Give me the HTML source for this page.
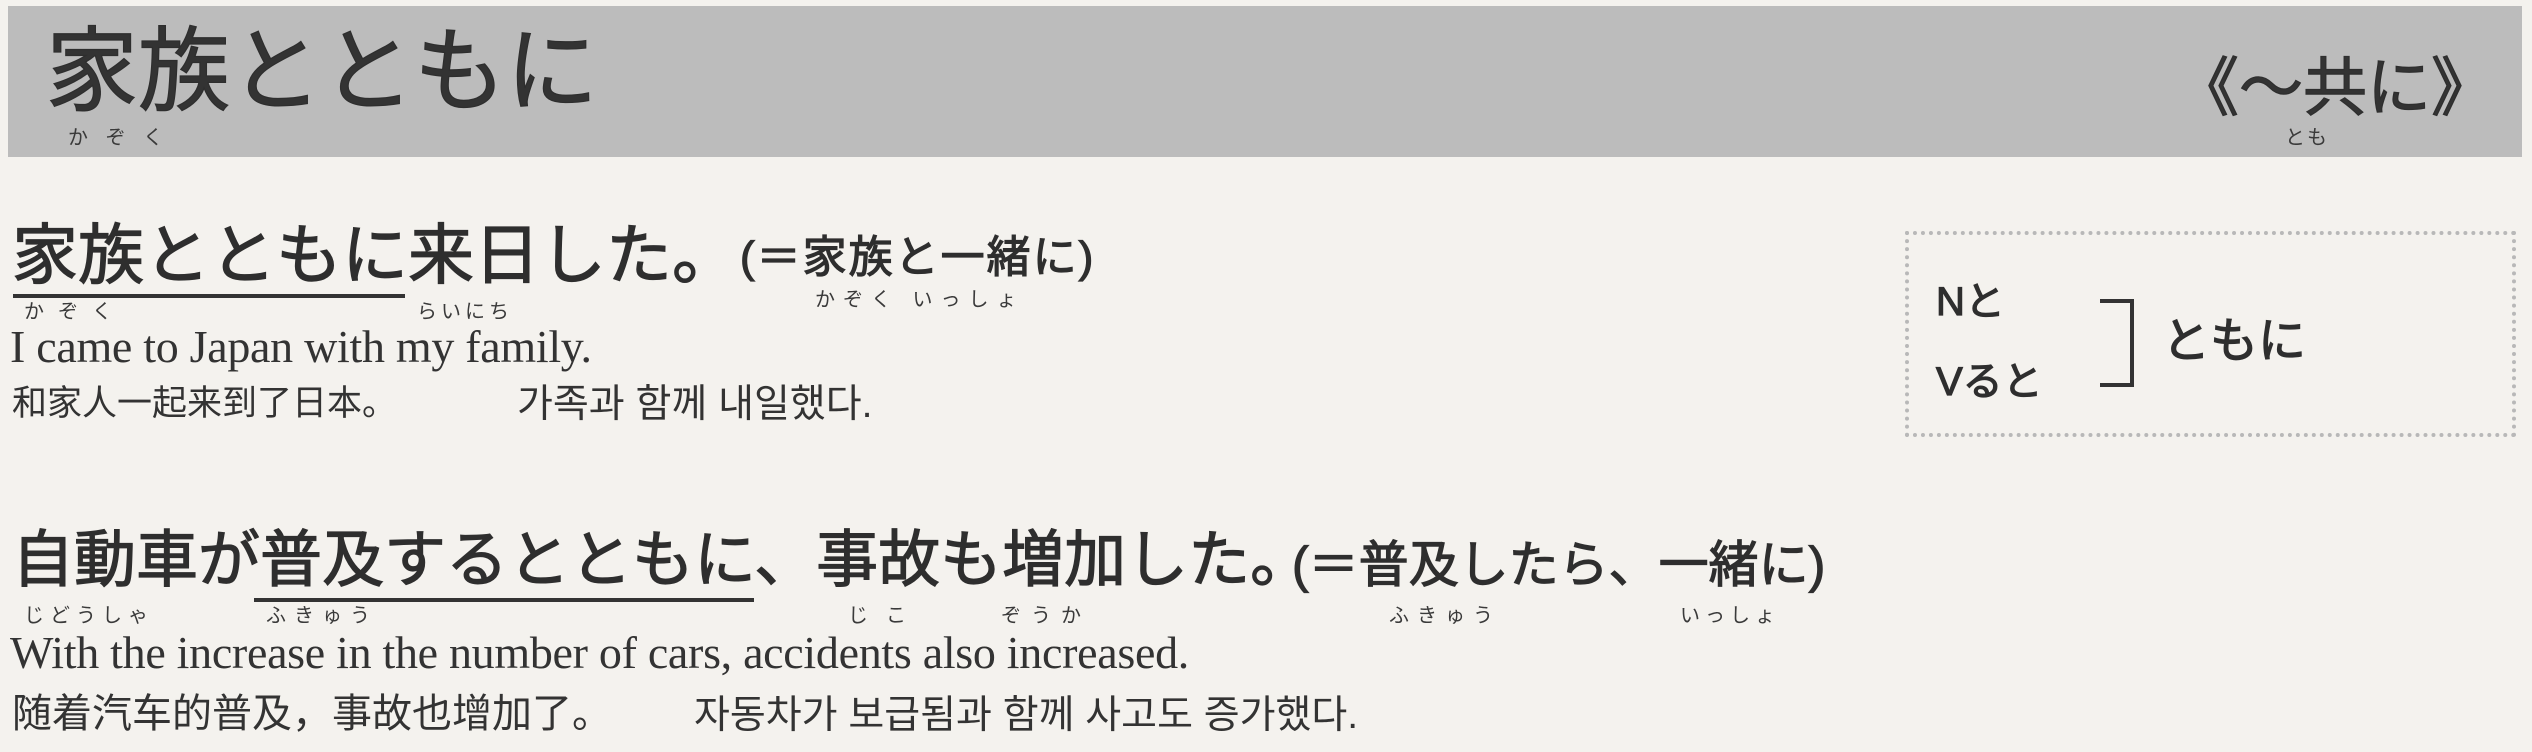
<!DOCTYPE html>
<html><head><meta charset="utf-8"><style>
html,body{margin:0;padding:0}
body{width:2532px;height:752px;background:#f4f2ee;position:relative;overflow:hidden;color:#2e2e2e;font-family:"Liberation Sans","Noto Sans CJK JP",sans-serif}
.a{position:absolute;white-space:nowrap;line-height:1}
.b{-webkit-text-stroke:1.2px #2e2e2e}
.band{position:absolute;left:8px;top:6px;width:2514px;height:151px;background:#bcbcbc}
.f{font-size:20px;color:#3a3a3a;letter-spacing:6px}
.en{font-family:"Liberation Serif",serif;font-size:46px;letter-spacing:-0.3px;color:#333}
.zh{font-family:"Liberation Sans","Noto Sans CJK SC",sans-serif;color:#333}
.ko{font-family:"Liberation Sans","Noto Sans CJK KR",sans-serif;font-size:39px;color:#333}
.ul{position:absolute;height:4px;background:#333}
.box{position:absolute;left:1905px;top:231px;width:611px;height:206px;border:4px dotted #b8b8b8;box-sizing:border-box}
</style></head><body>
<div class="band"></div>
<div class="a b" style="left:46px;top:26px;font-size:92px;color:#333">家族とともに</div>
<div class="a f" style="left:68px;top:128px">か ぞ く</div>
<div class="a b" style="left:2175px;top:56px;font-size:64px;color:#333">《～共に》</div>
<div class="a f" style="left:2285px;top:128px;letter-spacing:2px">とも</div>

<div class="a b" style="left:12px;top:222px;font-size:66px">家族とともに来日した。</div>
<div class="a b" style="left:740px;top:236px;font-size:44px;letter-spacing:2px">(＝家族と一緒に)</div>
<div class="ul" style="left:13px;top:294px;width:392px"></div>
<div class="a f" style="left:24px;top:302px;letter-spacing:14px">かぞく</div>
<div class="a f" style="left:417px;top:302px;letter-spacing:4px">らいにち</div>
<div class="a f" style="left:815px;top:290px;letter-spacing:8px">かぞく いっしょ</div>
<div class="a en" style="left:10px;top:324px">I came to Japan with my family.</div>
<div class="a zh" style="left:12px;top:386px;font-size:35px">和家人一起来到了日本。</div>
<div class="a ko" style="left:517px;top:385px">가족과 함께 내일했다.</div>

<div class="a b" style="left:12px;top:530px;font-size:62px">自動車が普及するとともに、事故も増加した。</div>
<div class="a b" style="left:1292px;top:540px;font-size:50px">(＝普及したら、一緒に)</div>
<div class="ul" style="left:254px;top:598px;width:500px"></div>
<div class="a f" style="left:24px;top:606px;letter-spacing:6px">じどうしゃ</div>
<div class="a f" style="left:266px;top:606px;letter-spacing:8px">ふきゅう</div>
<div class="a f" style="left:848px;top:606px;letter-spacing:18px">じこ</div>
<div class="a f" style="left:1001px;top:606px;letter-spacing:10px">ぞうか</div>
<div class="a f" style="left:1389px;top:606px;letter-spacing:8px">ふきゅう</div>
<div class="a f" style="left:1680px;top:606px;letter-spacing:5px">いっしょ</div>
<div class="a en" style="left:10px;top:630px">With the increase in the number of cars, accidents also increased.</div>
<div class="a zh" style="left:12px;top:694px;font-size:40px">随着汽车的普及，事故也增加了。</div>
<div class="a ko" style="left:694px;top:696px">자동차가 보급됨과 함께 사고도 증가했다.</div>

<div class="box"></div>
<div class="a b" style="left:1936px;top:282px;font-size:40px">Nと</div>
<div class="a b" style="left:1936px;top:362px;font-size:40px">Vると</div>
<div class="a" style="left:2100px;top:299px;width:34px;height:88px;border-top:4px solid #333;border-right:4px solid #333;border-bottom:4px solid #333;box-sizing:border-box"></div>
<div class="a b" style="left:2162px;top:318px;font-size:48px">ともに</div>
</body></html>
